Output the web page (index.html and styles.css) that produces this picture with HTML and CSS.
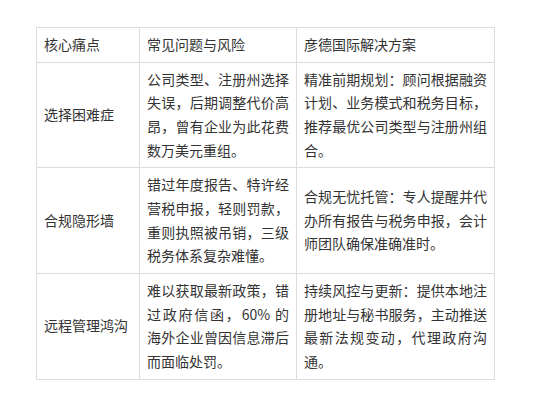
FILE: index.html
```html
<!DOCTYPE html>
<html lang="zh-CN">
<head>
<meta charset="utf-8">
<link rel="stylesheet" href="styles.css">
</head>
<body>
<div class="wrap">
<table class="tbl">
<colgroup>
<col class="c1">
<col class="c2">
<col class="c3">
</colgroup>
<thead>
<tr><th>核心痛点</th><th>常见问题与风险</th><th>彦德国际解决方案</th></tr>
</thead>
<tbody>
<tr>
<td>选择困难症</td>
<td>公司类型、注册州选择失误，后期调整代价高昂，曾有企业为此花费数万美元重组。</td>
<td>精准前期规划：顾问根据融资计划、业务模式和税务目标，推荐最优公司类型与注册州组合。</td>
</tr>
<tr>
<td>合规隐形墙</td>
<td>错过年度报告、特许经营税申报，轻则罚款，重则执照被吊销，三级税务体系复杂难懂。</td>
<td>合规无忧托管：专人提醒并代办所有报告与税务申报，会计师团队确保准确准时。</td>
</tr>
<tr>
<td>远程管理鸿沟</td>
<td>难以获取最新政策，错过政府信函，60% 的海外企业曾因信息滞后而面临处罚。</td>
<td>持续风控与更新：提供本地注册地址与秘书服务，主动推送最新法规变动，代理政府沟通。</td>
</tr>
</tbody>
</table>
</div>
</body>
</html>
```

FILE: styles.css
```css
html, body {
  margin: 0;
  padding: 0;
  background: #ffffff;
}
.wrap {
  padding: 27px 0 0 36px;
}
.tbl {
  border-collapse: collapse;
  table-layout: fixed;
  width: 458px;
  font-family: "Noto Sans CJK SC", "Noto Sans", sans-serif;
  font-size: 14px;
  line-height: 23.66px;
  color: #333333;
}
.c1 { width: 103px; }
.c2 { width: 157px; }
.c3 { width: 198px; }
.tbl th,
.tbl td {
  border: 1px solid #dddddd;
  padding: 5px 7px;
  vertical-align: middle;
  text-align: justify;
  font-weight: normal;
}
.tbl th {
  text-align: left;
}
```
